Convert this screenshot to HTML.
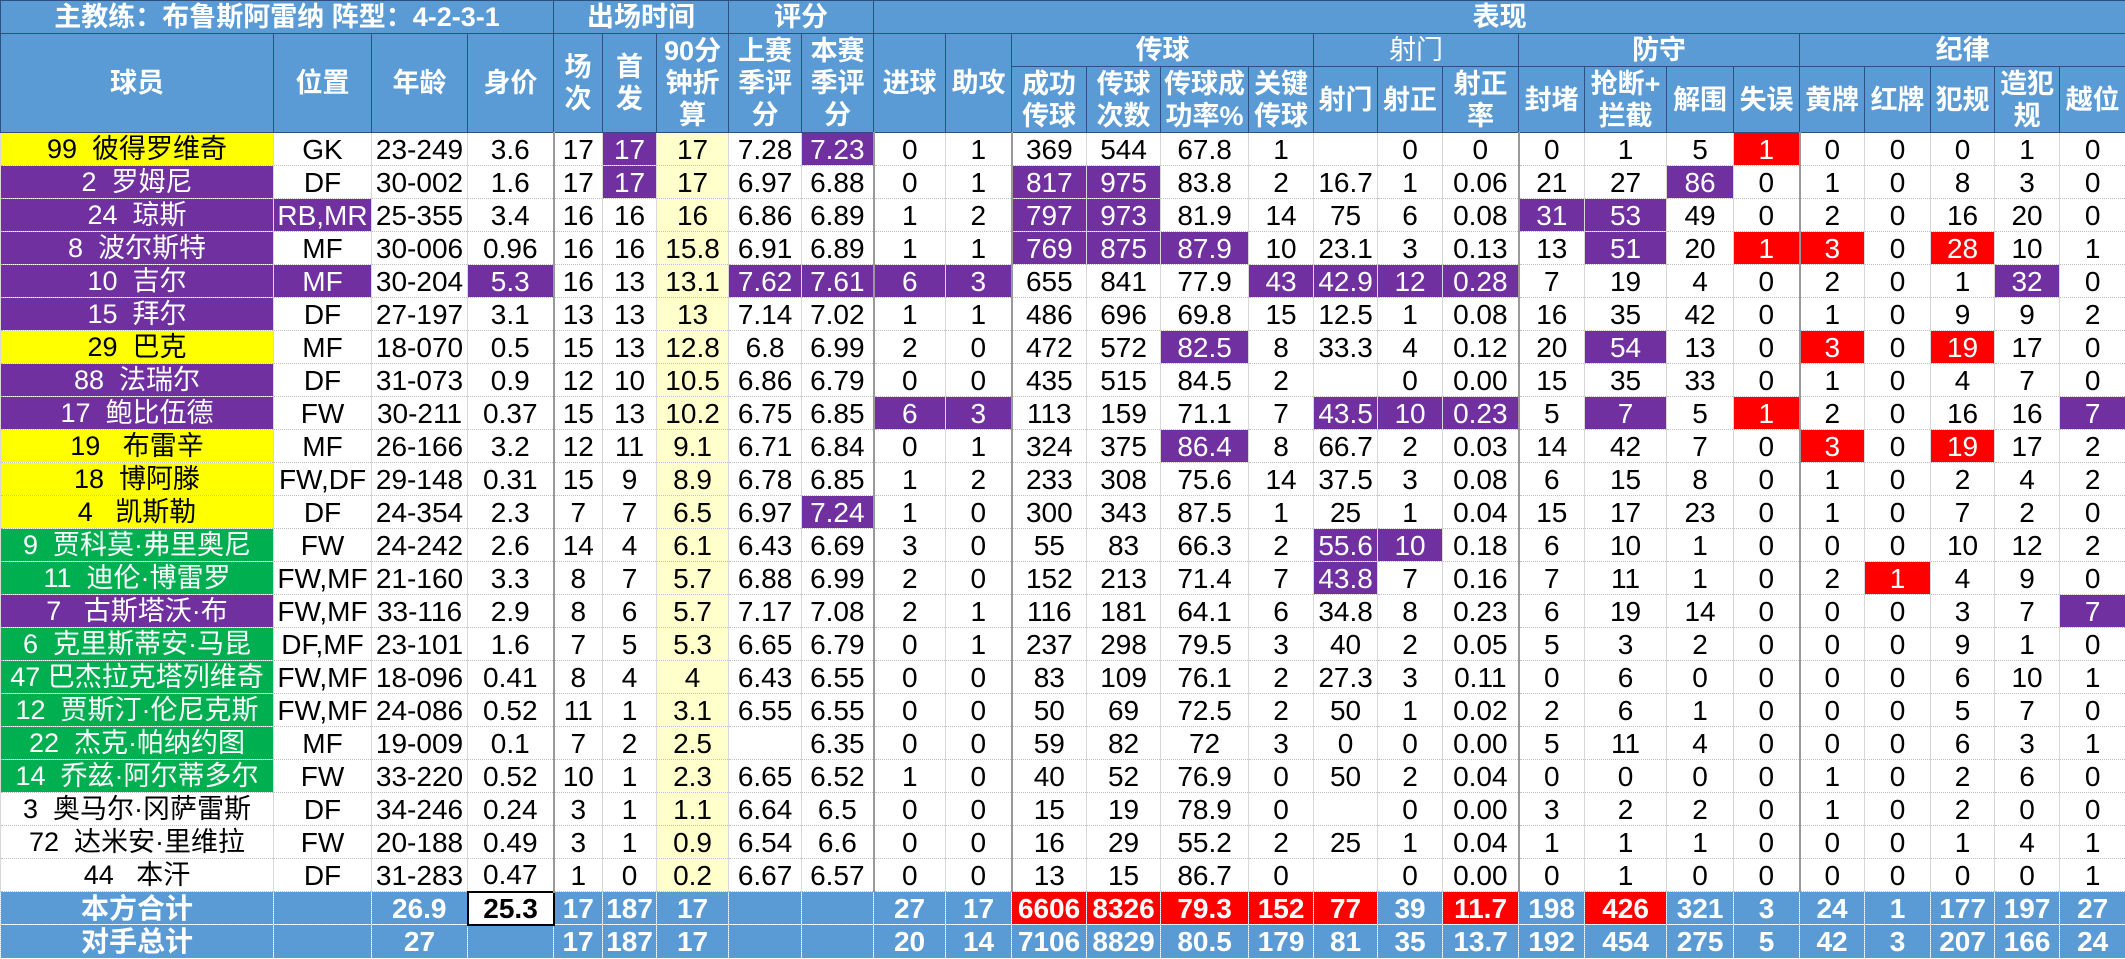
<!DOCTYPE html>
<html><head><meta charset="utf-8">
<style>
html,body{margin:0;padding:0;background:#fff;}
body{width:2125px;height:959px;overflow:hidden;}
table{border-collapse:collapse;table-layout:fixed;width:2125px;font-family:"Liberation Sans Narrow","Liberation Sans","Noto Sans CJK SC",sans-serif;}
td,th{padding:0;text-align:center;white-space:nowrap;overflow:hidden;}
th{background:#5B9BD5;color:#fff;font-weight:bold;font-size:27px;border:1px solid #2f4f7f;line-height:32px;font-family:"Liberation Sans","Noto Sans CJK SC",sans-serif;}
th.thin{font-weight:normal;}
tr.h1{height:33px}tr.h2{height:33px}tr.h3{height:66px}
tbody tr.d{height:33px}
tr.d td{font-size:28px;color:#000;border-top:1px dotted #bfbfbf;border-bottom:1px dotted #bfbfbf;border-left:1px solid #d8d8d8;border-right:1px solid #d8d8d8;line-height:31px;}
tr.d td:nth-child(7){background:#FFFFCC;}
tr.d td:nth-child(5),tr.d td:nth-child(10),tr.d td:nth-child(12),tr.d td:nth-child(19),tr.d td:nth-child(23){border-left:2px solid #999;}
tr.d td:first-child{font-family:"Liberation Sans","Noto Sans CJK SC",sans-serif;font-size:27px;}
tr.d td.y{background:#FFFF00;color:#000;}
tr.d td.v,tr.d td.p{background:#7030A0;color:#fff;}
tr.d td.g{background:#00B050;color:#fff;}
tr.d td.w{background:#fff;}
tr.d td.r{background:#FF0000;color:#fff;}
tr.t{height:33px}
tr.t td{background:#5B9BD5;color:#fff;font-weight:bold;font-size:28px;border-left:1px dotted #b9d3ee;border-right:1px dotted #b9d3ee;border-top:1px dotted #dfe9f5;line-height:31px;}
tr.t td:first-child{font-family:"Liberation Sans","Noto Sans CJK SC",sans-serif;}
tr.t td.r{background:#FF0000;}
tr.t td.bx{background:#fff;color:#000;border:2px solid #000;}
</style></head><body>
<table>
<colgroup>
<col style="width:273px"><col style="width:98px"><col style="width:96px"><col style="width:86px"><col style="width:49px"><col style="width:54px"><col style="width:72px"><col style="width:73px"><col style="width:72px"><col style="width:72px"><col style="width:66px"><col style="width:75px"><col style="width:74px"><col style="width:88px"><col style="width:65px"><col style="width:64px"><col style="width:65px"><col style="width:76px"><col style="width:66px"><col style="width:82px"><col style="width:67px"><col style="width:66px"><col style="width:65px"><col style="width:66px"><col style="width:64px"><col style="width:65px"><col style="width:66px">
</colgroup>
<thead>
<tr class="h1"><th colspan="4">主教练：布鲁斯阿雷纳 阵型：4-2-3-1</th><th colspan="3">出场时间</th><th colspan="2">评分</th><th colspan="18">表现</th></tr>
<tr class="h2"><th rowspan="2">球员</th><th rowspan="2">位置</th><th rowspan="2">年龄</th><th rowspan="2">身价</th><th rowspan="2">场<br>次</th><th rowspan="2">首<br>发</th><th rowspan="2">90分<br>钟折<br>算</th><th rowspan="2">上赛<br>季评<br>分</th><th rowspan="2">本赛<br>季评<br>分</th><th rowspan="2">进球</th><th rowspan="2">助攻</th><th colspan="4">传球</th><th colspan="3" class="thin">射门</th><th colspan="4">防守</th><th colspan="5">纪律</th></tr>
<tr class="h3"><th>成功<br>传球</th><th>传球<br>次数</th><th>传球成<br>功率%</th><th>关键<br>传球</th><th>射门</th><th>射正</th><th>射正<br>率</th><th>封堵</th><th>抢断+<br>拦截</th><th>解围</th><th>失误</th><th>黄牌</th><th>红牌</th><th>犯规</th><th>造犯<br>规</th><th>越位</th></tr>
</thead>
<tbody>
<tr class="d"><td class="y">99&nbsp;&nbsp;彼得罗维奇</td><td>GK</td><td>23-249</td><td>3.6</td><td>17</td><td class="p">17</td><td>17</td><td>7.28</td><td class="p">7.23</td><td>0</td><td>1</td><td>369</td><td>544</td><td>67.8</td><td>1</td><td></td><td>0</td><td>0</td><td>0</td><td>1</td><td>5</td><td class="r">1</td><td>0</td><td>0</td><td>0</td><td>1</td><td>0</td></tr>
<tr class="d"><td class="v">2&nbsp;&nbsp;罗姆尼</td><td>DF</td><td>30-002</td><td>1.6</td><td>17</td><td class="p">17</td><td>17</td><td>6.97</td><td>6.88</td><td>0</td><td>1</td><td class="p">817</td><td class="p">975</td><td>83.8</td><td>2</td><td>16.7</td><td>1</td><td>0.06</td><td>21</td><td>27</td><td class="p">86</td><td>0</td><td>1</td><td>0</td><td>8</td><td>3</td><td>0</td></tr>
<tr class="d"><td class="v">24&nbsp;&nbsp;琼斯</td><td class="p">RB,MR</td><td>25-355</td><td>3.4</td><td>16</td><td>16</td><td>16</td><td>6.86</td><td>6.89</td><td>1</td><td>2</td><td class="p">797</td><td class="p">973</td><td>81.9</td><td>14</td><td>75</td><td>6</td><td>0.08</td><td class="p">31</td><td class="p">53</td><td>49</td><td>0</td><td>2</td><td>0</td><td>16</td><td>20</td><td>0</td></tr>
<tr class="d"><td class="v">8&nbsp;&nbsp;波尔斯特</td><td>MF</td><td>30-006</td><td>0.96</td><td>16</td><td>16</td><td>15.8</td><td>6.91</td><td>6.89</td><td>1</td><td>1</td><td class="p">769</td><td class="p">875</td><td class="p">87.9</td><td>10</td><td>23.1</td><td>3</td><td>0.13</td><td>13</td><td class="p">51</td><td>20</td><td class="r">1</td><td class="r">3</td><td>0</td><td class="r">28</td><td>10</td><td>1</td></tr>
<tr class="d"><td class="v">10&nbsp;&nbsp;吉尔</td><td class="p">MF</td><td>30-204</td><td class="p">5.3</td><td>16</td><td>13</td><td>13.1</td><td class="p">7.62</td><td class="p">7.61</td><td class="p">6</td><td class="p">3</td><td>655</td><td>841</td><td>77.9</td><td class="p">43</td><td class="p">42.9</td><td class="p">12</td><td class="p">0.28</td><td>7</td><td>19</td><td>4</td><td>0</td><td>2</td><td>0</td><td>1</td><td class="p">32</td><td>0</td></tr>
<tr class="d"><td class="v">15&nbsp;&nbsp;拜尔</td><td>DF</td><td>27-197</td><td>3.1</td><td>13</td><td>13</td><td>13</td><td>7.14</td><td>7.02</td><td>1</td><td>1</td><td>486</td><td>696</td><td>69.8</td><td>15</td><td>12.5</td><td>1</td><td>0.08</td><td>16</td><td>35</td><td>42</td><td>0</td><td>1</td><td>0</td><td>9</td><td>9</td><td>2</td></tr>
<tr class="d"><td class="y">29&nbsp;&nbsp;巴克</td><td>MF</td><td>18-070</td><td>0.5</td><td>15</td><td>13</td><td>12.8</td><td>6.8</td><td>6.99</td><td>2</td><td>0</td><td>472</td><td>572</td><td class="p">82.5</td><td>8</td><td>33.3</td><td>4</td><td>0.12</td><td>20</td><td class="p">54</td><td>13</td><td>0</td><td class="r">3</td><td>0</td><td class="r">19</td><td>17</td><td>0</td></tr>
<tr class="d"><td class="v">88&nbsp;&nbsp;法瑞尔</td><td>DF</td><td>31-073</td><td>0.9</td><td>12</td><td>10</td><td>10.5</td><td>6.86</td><td>6.79</td><td>0</td><td>0</td><td>435</td><td>515</td><td>84.5</td><td>2</td><td></td><td>0</td><td>0.00</td><td>15</td><td>35</td><td>33</td><td>0</td><td>1</td><td>0</td><td>4</td><td>7</td><td>0</td></tr>
<tr class="d"><td class="v">17&nbsp;&nbsp;鲍比伍德</td><td>FW</td><td>30-211</td><td>0.37</td><td>15</td><td>13</td><td>10.2</td><td>6.75</td><td>6.85</td><td class="p">6</td><td class="p">3</td><td>113</td><td>159</td><td>71.1</td><td>7</td><td class="p">43.5</td><td class="p">10</td><td class="p">0.23</td><td>5</td><td class="p">7</td><td>5</td><td class="r">1</td><td>2</td><td>0</td><td>16</td><td>16</td><td class="p">7</td></tr>
<tr class="d"><td class="y">19&nbsp;&nbsp;&nbsp;布雷辛</td><td>MF</td><td>26-166</td><td>3.2</td><td>12</td><td>11</td><td>9.1</td><td>6.71</td><td>6.84</td><td>0</td><td>1</td><td>324</td><td>375</td><td class="p">86.4</td><td>8</td><td>66.7</td><td>2</td><td>0.03</td><td>14</td><td>42</td><td>7</td><td>0</td><td class="r">3</td><td>0</td><td class="r">19</td><td>17</td><td>2</td></tr>
<tr class="d"><td class="y">18&nbsp;&nbsp;博阿滕</td><td>FW,DF</td><td>29-148</td><td>0.31</td><td>15</td><td>9</td><td>8.9</td><td>6.78</td><td>6.85</td><td>1</td><td>2</td><td>233</td><td>308</td><td>75.6</td><td>14</td><td>37.5</td><td>3</td><td>0.08</td><td>6</td><td>15</td><td>8</td><td>0</td><td>1</td><td>0</td><td>2</td><td>4</td><td>2</td></tr>
<tr class="d"><td class="y">4&nbsp;&nbsp;&nbsp;凯斯勒</td><td>DF</td><td>24-354</td><td>2.3</td><td>7</td><td>7</td><td>6.5</td><td>6.97</td><td class="p">7.24</td><td>1</td><td>0</td><td>300</td><td>343</td><td>87.5</td><td>1</td><td>25</td><td>1</td><td>0.04</td><td>15</td><td>17</td><td>23</td><td>0</td><td>1</td><td>0</td><td>7</td><td>2</td><td>0</td></tr>
<tr class="d"><td class="g">9&nbsp;&nbsp;贾科莫·弗里奥尼</td><td>FW</td><td>24-242</td><td>2.6</td><td>14</td><td>4</td><td>6.1</td><td>6.43</td><td>6.69</td><td>3</td><td>0</td><td>55</td><td>83</td><td>66.3</td><td>2</td><td class="p">55.6</td><td class="p">10</td><td>0.18</td><td>6</td><td>10</td><td>1</td><td>0</td><td>0</td><td>0</td><td>10</td><td>12</td><td>2</td></tr>
<tr class="d"><td class="g">11&nbsp;&nbsp;迪伦·博雷罗</td><td>FW,MF</td><td>21-160</td><td>3.3</td><td>8</td><td>7</td><td>5.7</td><td>6.88</td><td>6.99</td><td>2</td><td>0</td><td>152</td><td>213</td><td>71.4</td><td>7</td><td class="p">43.8</td><td>7</td><td>0.16</td><td>7</td><td>11</td><td>1</td><td>0</td><td>2</td><td class="r">1</td><td>4</td><td>9</td><td>0</td></tr>
<tr class="d"><td class="v">7&nbsp;&nbsp;&nbsp;古斯塔沃·布</td><td>FW,MF</td><td>33-116</td><td>2.9</td><td>8</td><td>6</td><td>5.7</td><td>7.17</td><td>7.08</td><td>2</td><td>1</td><td>116</td><td>181</td><td>64.1</td><td>6</td><td>34.8</td><td>8</td><td>0.23</td><td>6</td><td>19</td><td>14</td><td>0</td><td>0</td><td>0</td><td>3</td><td>7</td><td class="p">7</td></tr>
<tr class="d"><td class="g">6&nbsp;&nbsp;克里斯蒂安·马昆</td><td>DF,MF</td><td>23-101</td><td>1.6</td><td>7</td><td>5</td><td>5.3</td><td>6.65</td><td>6.79</td><td>0</td><td>1</td><td>237</td><td>298</td><td>79.5</td><td>3</td><td>40</td><td>2</td><td>0.05</td><td>5</td><td>3</td><td>2</td><td>0</td><td>0</td><td>0</td><td>9</td><td>1</td><td>0</td></tr>
<tr class="d"><td class="g">47&nbsp;巴杰拉克塔列维奇</td><td>FW,MF</td><td>18-096</td><td>0.41</td><td>8</td><td>4</td><td>4</td><td>6.43</td><td>6.55</td><td>0</td><td>0</td><td>83</td><td>109</td><td>76.1</td><td>2</td><td>27.3</td><td>3</td><td>0.11</td><td>0</td><td>6</td><td>0</td><td>0</td><td>0</td><td>0</td><td>6</td><td>10</td><td>1</td></tr>
<tr class="d"><td class="g">12&nbsp;&nbsp;贾斯汀·伦尼克斯</td><td>FW,MF</td><td>24-086</td><td>0.52</td><td>11</td><td>1</td><td>3.1</td><td>6.55</td><td>6.55</td><td>0</td><td>0</td><td>50</td><td>69</td><td>72.5</td><td>2</td><td>50</td><td>1</td><td>0.02</td><td>2</td><td>6</td><td>1</td><td>0</td><td>0</td><td>0</td><td>5</td><td>7</td><td>0</td></tr>
<tr class="d"><td class="g">22&nbsp;&nbsp;杰克·帕纳约图</td><td>MF</td><td>19-009</td><td>0.1</td><td>7</td><td>2</td><td>2.5</td><td></td><td>6.35</td><td>0</td><td>0</td><td>59</td><td>82</td><td>72</td><td>3</td><td>0</td><td>0</td><td>0.00</td><td>5</td><td>11</td><td>4</td><td>0</td><td>0</td><td>0</td><td>6</td><td>3</td><td>1</td></tr>
<tr class="d"><td class="g">14&nbsp;&nbsp;乔兹·阿尔蒂多尔</td><td>FW</td><td>33-220</td><td>0.52</td><td>10</td><td>1</td><td>2.3</td><td>6.65</td><td>6.52</td><td>1</td><td>0</td><td>40</td><td>52</td><td>76.9</td><td>0</td><td>50</td><td>2</td><td>0.04</td><td>0</td><td>0</td><td>0</td><td>0</td><td>1</td><td>0</td><td>2</td><td>6</td><td>0</td></tr>
<tr class="d"><td class="w">3&nbsp;&nbsp;奥马尔·冈萨雷斯</td><td>DF</td><td>34-246</td><td>0.24</td><td>3</td><td>1</td><td>1.1</td><td>6.64</td><td>6.5</td><td>0</td><td>0</td><td>15</td><td>19</td><td>78.9</td><td>0</td><td></td><td>0</td><td>0.00</td><td>3</td><td>2</td><td>2</td><td>0</td><td>1</td><td>0</td><td>2</td><td>0</td><td>0</td></tr>
<tr class="d"><td class="w">72&nbsp;&nbsp;达米安·里维拉</td><td>FW</td><td>20-188</td><td>0.49</td><td>3</td><td>1</td><td>0.9</td><td>6.54</td><td>6.6</td><td>0</td><td>0</td><td>16</td><td>29</td><td>55.2</td><td>2</td><td>25</td><td>1</td><td>0.04</td><td>1</td><td>1</td><td>1</td><td>0</td><td>0</td><td>0</td><td>1</td><td>4</td><td>1</td></tr>
<tr class="d"><td class="w">44&nbsp;&nbsp;&nbsp;本汗</td><td>DF</td><td>31-283</td><td>0.47</td><td>1</td><td>0</td><td>0.2</td><td>6.67</td><td>6.57</td><td>0</td><td>0</td><td>13</td><td>15</td><td>86.7</td><td>0</td><td></td><td>0</td><td>0.00</td><td>0</td><td>1</td><td>0</td><td>0</td><td>0</td><td>0</td><td>0</td><td>0</td><td>1</td></tr>
<tr class="t"><td>本方合计</td><td></td><td>26.9</td><td class="bx">25.3</td><td>17</td><td>187</td><td>17</td><td></td><td></td><td>27</td><td>17</td><td class="r">6606</td><td class="r">8326</td><td class="r">79.3</td><td class="r">152</td><td class="r">77</td><td>39</td><td class="r">11.7</td><td>198</td><td class="r">426</td><td>321</td><td>3</td><td>24</td><td>1</td><td>177</td><td>197</td><td>27</td></tr>
<tr class="t"><td>对手总计</td><td></td><td>27</td><td></td><td>17</td><td>187</td><td>17</td><td></td><td></td><td>20</td><td>14</td><td>7106</td><td>8829</td><td>80.5</td><td>179</td><td>81</td><td>35</td><td>13.7</td><td>192</td><td>454</td><td>275</td><td>5</td><td>42</td><td>3</td><td>207</td><td>166</td><td>24</td></tr>
</tbody>
</table>
</body></html>
